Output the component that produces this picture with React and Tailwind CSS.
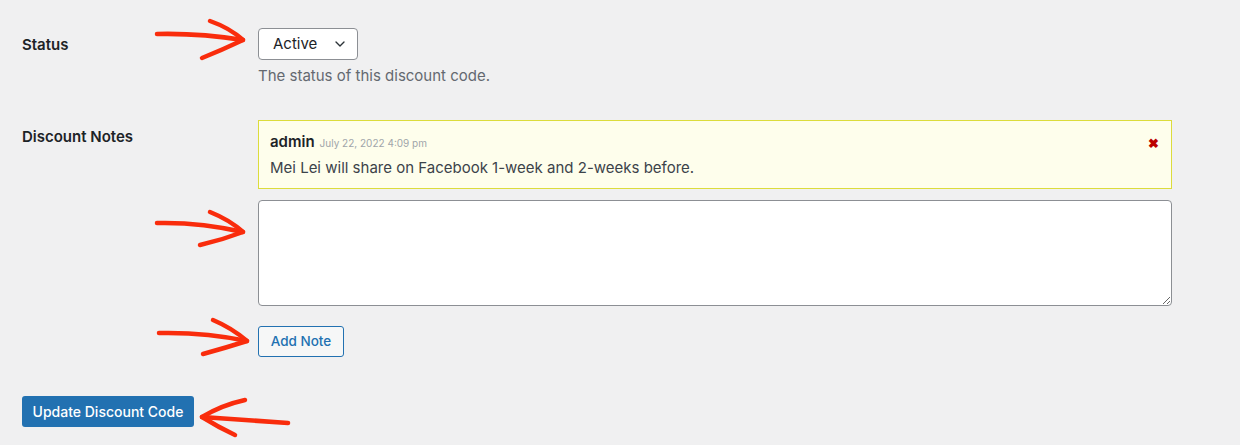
import { ChevronDown } from 'lucide-react';

const font = { fontFamily: 'Inter, "Liberation Sans", sans-serif' };

const Arrows = () => (
  <svg
    className="absolute inset-0 pointer-events-none"
    width="1240"
    height="445"
    viewBox="0 0 1240 445"
    fill="none"
    stroke="#f92c0c"
    strokeWidth="4.5"
    strokeLinecap="round"
    strokeLinejoin="round"
  >
    {/* status */}
    <path d="M157 34 Q200 33 243 40" />
    <path d="M210 21 Q230 28 243 40 Q222 50 202 58" />
    {/* textarea */}
    <path d="M157 223 Q200 222 243 232" />
    <path d="M210 212 Q230 220 243 232 Q222 240 200 245" />
    {/* add note */}
    <path d="M159 333 Q205 332 247 341" />
    <path d="M213 320 Q232 328 247 341 Q225 348 203 354" />
    {/* update */}
    <path d="M288 423 Q245 420 202 417" />
    <path d="M245 400 Q222 405 202 417 Q218 427 235 435" />
  </svg>
);

export default function App() {
  return (
    <div className="relative w-[1240px] min-h-[445px] bg-[#f0f0f1] text-[#1d2327] px-[22px] pt-[28px]" style={font}>
      {/* Status */}
      <div className="flex">
        <div className="w-[236px] pt-[7px] text-[15px] leading-[20px] font-semibold">Status</div>
        <div>
          <div className="flex items-center justify-between w-[100px] h-[32px] pl-[14px] pr-[9px] bg-white border border-[#8c8f94] rounded-[4px] text-[15px]">
            <span>Active</span>
            <ChevronDown className="w-[16px] h-[16px] text-[#2c3338]" strokeWidth={2} />
          </div>
          <p className="mt-[6px] text-[15px] leading-[20px] text-[#646970]">The status of this discount code.</p>
        </div>
      </div>

      {/* Discount Notes */}
      <div className="flex mt-[34px]">
        <div className="w-[236px] pt-[7px] text-[15px] leading-[20px] font-semibold">Discount Notes</div>
        <div className="w-[914px]">
          <div className="relative h-[69px] border border-[#dcdc3c] bg-[#fefeec] px-[11px] pt-[11px]">
            <div className="flex items-baseline gap-[5px] leading-[20px]">
              <span className="text-[15px] font-semibold">admin</span>
              <span className="text-[10px] text-[#a0a5aa]">July 22, 2022 4:09 pm</span>
            </div>
            <p className="mt-[5px] text-[15px] leading-[20px] text-[#3c434a]">
              Mei Lei will share on Facebook 1-week and 2-weeks before.
            </p>
            <span className="absolute right-[12px] top-[16px] text-[13px] leading-[13px] font-bold text-[#b00]">✖</span>
          </div>
          <textarea className="mt-[11px] block w-full h-[106px] bg-white border border-[#8c8f94] rounded-[4px]" />
          <button className="mt-[20px] h-[31px] w-[86px] border border-[#2271b1] rounded-[3px] bg-[#f6f7f7] text-[#2271b1] text-[13.5px] font-medium">
            Add Note
          </button>
        </div>
      </div>

      <button className="mt-[39px] h-[31px] w-[172px] rounded-[3px] bg-[#2271b1] text-white text-[14px] font-medium">
        Update Discount Code
      </button>

      <Arrows />
    </div>
  );
}
